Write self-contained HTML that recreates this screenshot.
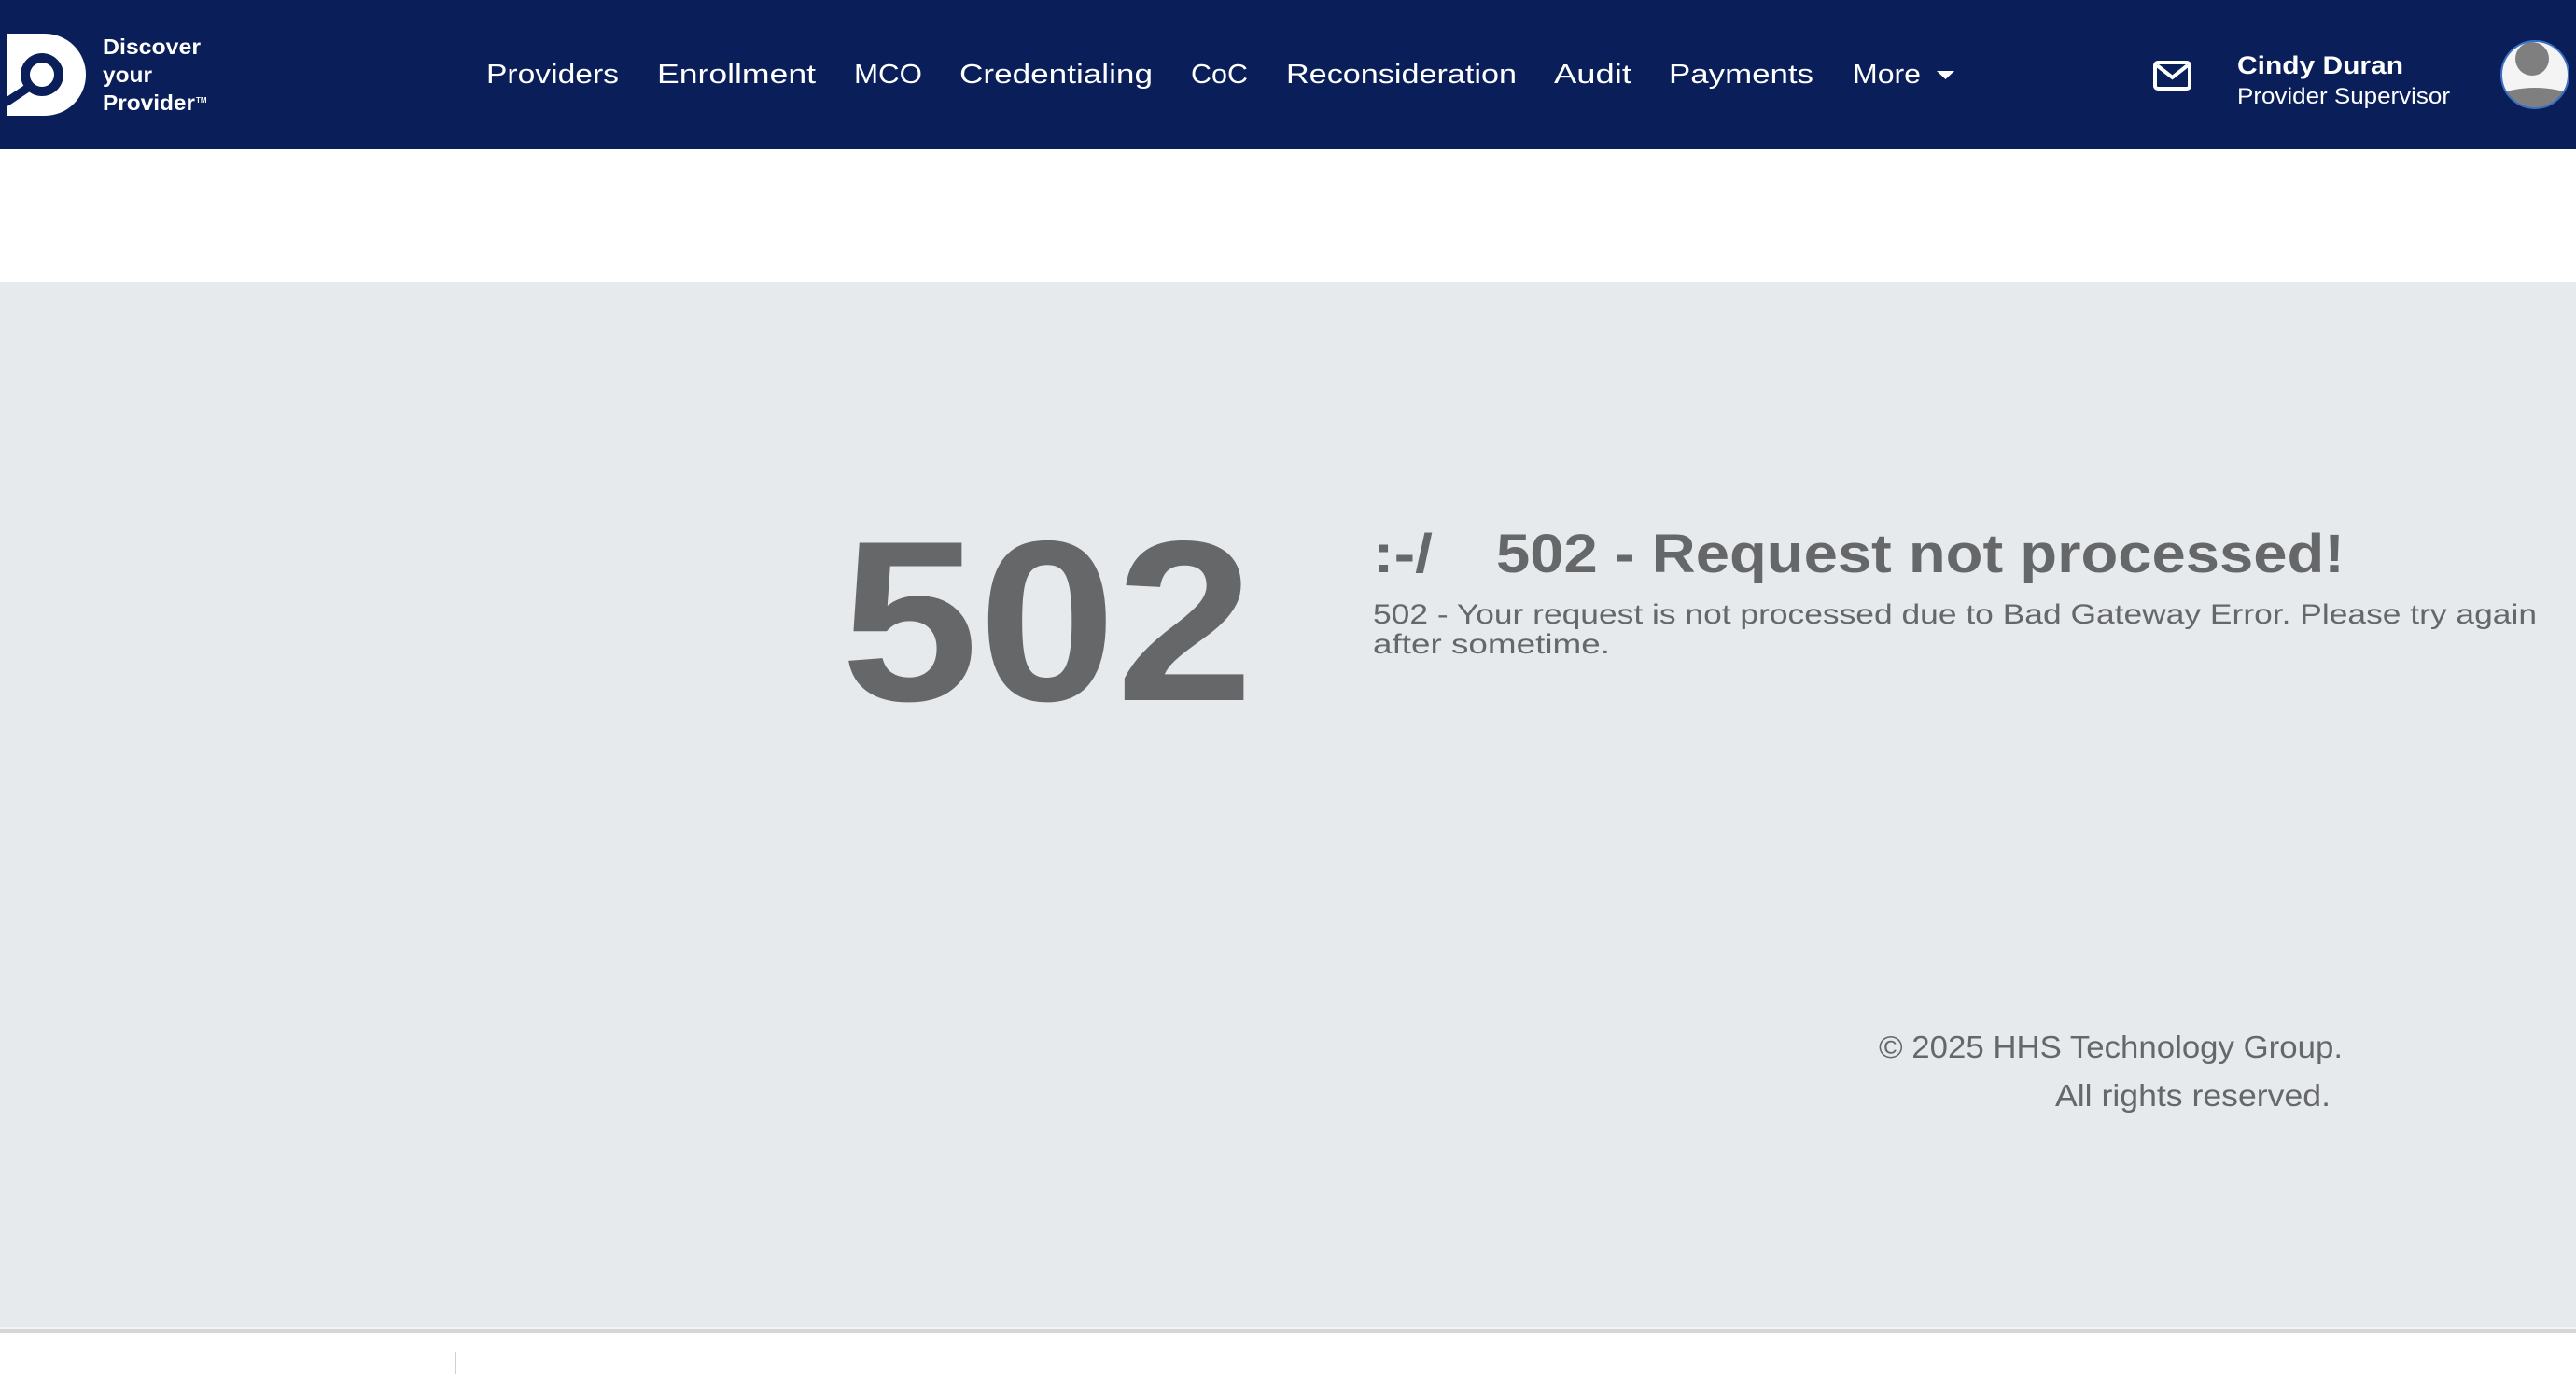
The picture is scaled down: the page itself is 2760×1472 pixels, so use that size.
<!DOCTYPE html>
<html><head><meta charset="utf-8"><style>
html,body{margin:0;padding:0;width:2760px;height:1472px;overflow:hidden;background:#fff;font-family:"Liberation Sans",sans-serif}
svg{display:block}
</style></head><body>
<svg width="2760" height="1472" viewBox="0 0 2760 1472" xmlns="http://www.w3.org/2000/svg" font-family="Liberation Sans, sans-serif">
<rect x="0" y="0" width="2760" height="160" fill="#0a1f5a"/>
<rect x="0" y="302" width="2760" height="1120" fill="#e6eaed"/>
<rect x="0" y="1422" width="2760" height="2" fill="#f2f2f2"/>
<rect x="0" y="1424" width="2760" height="4" fill="#d6d6d6"/>
<rect x="487" y="1448" width="2" height="24" fill="#d0d0d0"/>
<!-- logo -->
<path d="M8 36 H48 A44 44 0 0 1 48 124 H8 Z" fill="#fff"/>
<circle cx="45" cy="80" r="23" fill="#0a1f5a"/>
<circle cx="45" cy="80" r="13" fill="#fff"/>
<path d="M30 94 L6 110" stroke="#0a1f5a" stroke-width="9"/>
<g fill="#fff" font-weight="bold" font-size="23">
<text x="110" y="58" textLength="105" lengthAdjust="spacingAndGlyphs">Discover</text>
<text x="110" y="88" textLength="53" lengthAdjust="spacingAndGlyphs">your</text>
<text x="110" y="118" textLength="99" lengthAdjust="spacingAndGlyphs">Provider</text>
<text x="210" y="110" font-size="8">TM</text>
</g>
<!-- nav -->
<g fill="#fff" font-size="29">
<text x="521" y="89" textLength="142" lengthAdjust="spacingAndGlyphs">Providers</text>
<text x="704" y="89" textLength="170" lengthAdjust="spacingAndGlyphs">Enrollment</text>
<text x="915" y="89" textLength="73" lengthAdjust="spacingAndGlyphs">MCO</text>
<text x="1028" y="89" textLength="207" lengthAdjust="spacingAndGlyphs">Credentialing</text>
<text x="1276" y="89" textLength="61" lengthAdjust="spacingAndGlyphs">CoC</text>
<text x="1378" y="89" textLength="247" lengthAdjust="spacingAndGlyphs">Reconsideration</text>
<text x="1665" y="89" textLength="83" lengthAdjust="spacingAndGlyphs">Audit</text>
<text x="1788" y="89" textLength="155" lengthAdjust="spacingAndGlyphs">Payments</text>
<text x="1985" y="89" textLength="73" lengthAdjust="spacingAndGlyphs">More</text>
</g>
<path d="M2075 76 H2094 L2084.5 85 Z" fill="#fff"/>
<!-- mail -->
<rect x="2309" y="67" width="37" height="28" rx="3" fill="none" stroke="#fff" stroke-width="4"/>
<path d="M2311 70 L2327.5 83 L2344 70" fill="none" stroke="#fff" stroke-width="4"/>
<text x="2397" y="79" fill="#fff" font-size="27" font-weight="bold" textLength="178" lengthAdjust="spacingAndGlyphs">Cindy Duran</text>
<text x="2397" y="111" fill="#fff" font-size="24" textLength="228" lengthAdjust="spacingAndGlyphs">Provider Supervisor</text>
<!-- avatar -->
<defs><clipPath id="av"><circle cx="2716" cy="80" r="36"/></clipPath></defs>
<circle cx="2716" cy="80" r="36" fill="#f4f4f4"/>
<g clip-path="url(#av)" fill="#7f7f7f">
<circle cx="2713" cy="63" r="18"/>
<ellipse cx="2716" cy="125" rx="62" ry="31"/>
</g>
<circle cx="2716" cy="80" r="36" fill="none" stroke="#3a6fc4" stroke-width="2"/>
<!-- content -->
<text x="901" y="750" fill="#666769" font-size="245" font-weight="bold" textLength="442" lengthAdjust="spacingAndGlyphs">502</text>
<g fill="#666769" font-size="58" font-weight="bold">
<text x="1471" y="613" textLength="64" lengthAdjust="spacingAndGlyphs">:-/</text>
<text x="1603" y="613" textLength="909" lengthAdjust="spacingAndGlyphs">502 - Request not processed!</text>
</g>
<g fill="#666769" font-size="30">
<text x="1471" y="668" textLength="1247" lengthAdjust="spacingAndGlyphs">502 - Your request is not processed due to Bad Gateway Error. Please try again</text>
<text x="1471" y="700" textLength="254" lengthAdjust="spacingAndGlyphs">after sometime.</text>
</g>
<g fill="#666769" font-size="33">
<text x="2013" y="1133" textLength="497" lengthAdjust="spacingAndGlyphs">© 2025 HHS Technology Group.</text>
<text x="2202" y="1185" textLength="295" lengthAdjust="spacingAndGlyphs">All rights reserved.</text>
</g>
</svg>
</body></html>
